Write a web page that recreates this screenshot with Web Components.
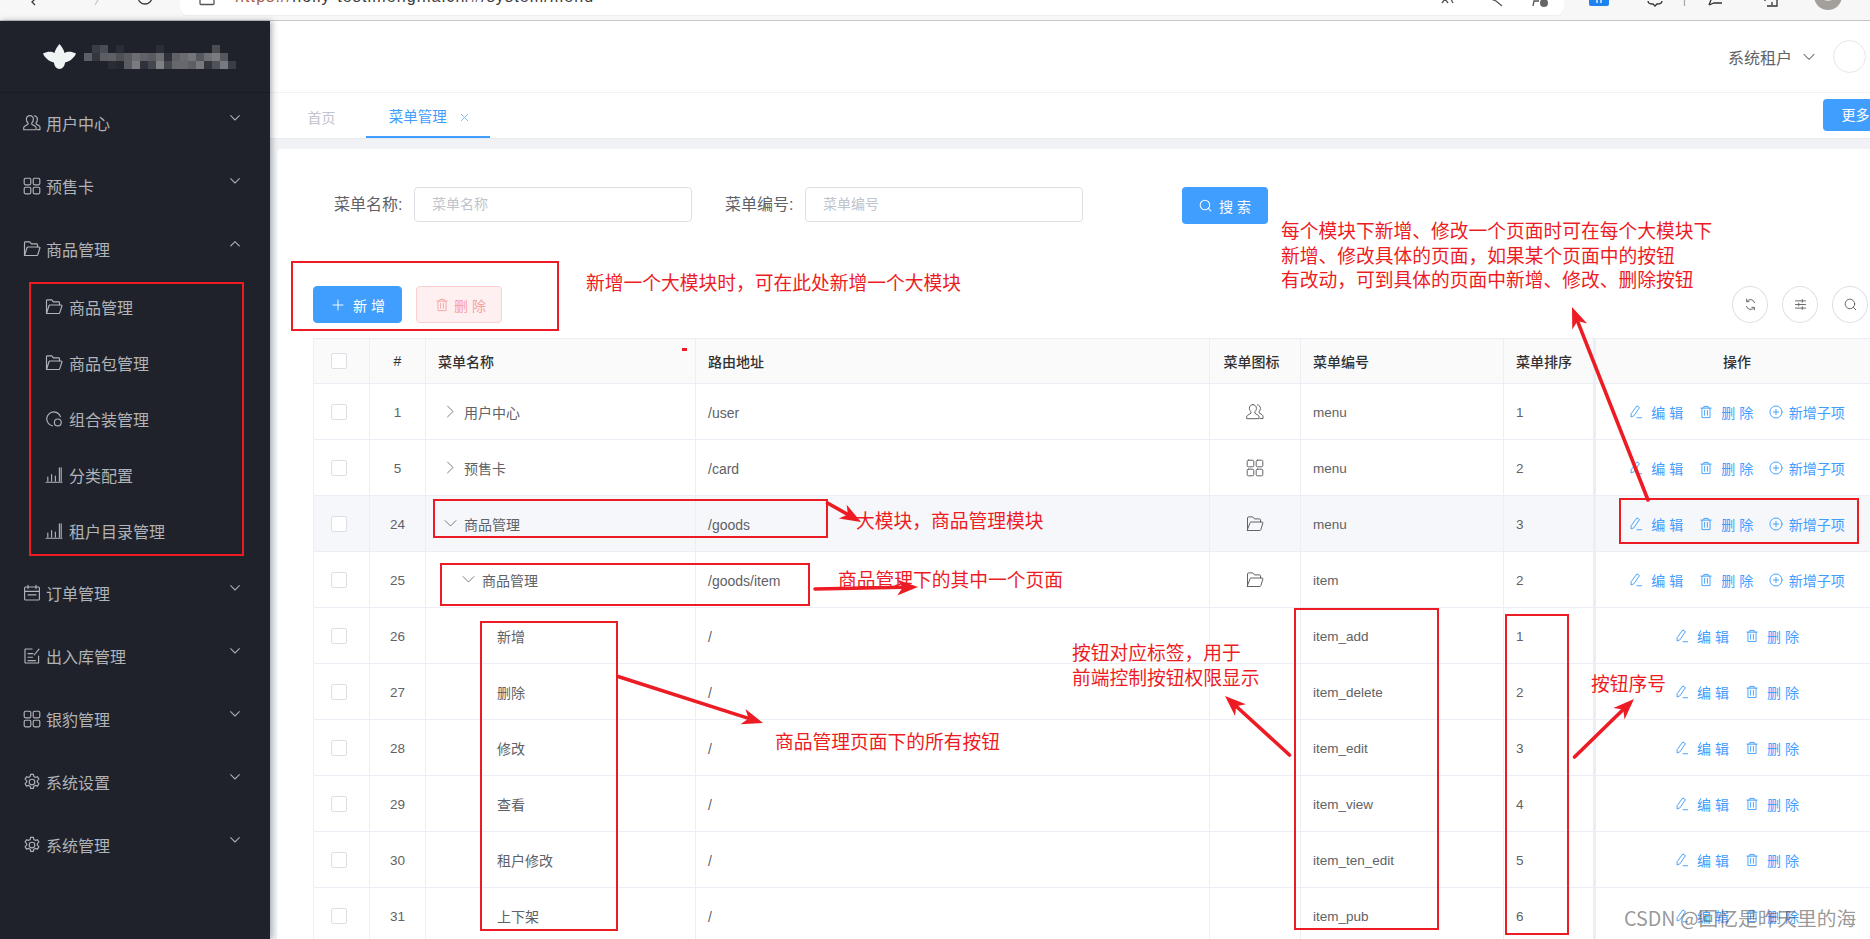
<!DOCTYPE html>
<html lang="zh-CN">
<head>
<meta charset="utf-8">
<title>菜单管理</title>
<style>
html,body{margin:0;padding:0;width:1870px;height:939px;overflow:hidden;background:#fff;font-family:"Liberation Sans","Noto Sans CJK SC",sans-serif;}
anno-box.dot{border:0;background:#ed1c24}
</style>
</head>
<body>
<admin-page>
  <browser-bar slot="bar"></browser-bar>
  <side-nav slot="side">
    <logo-mark></logo-mark>
    <nav-item icon="user" chev="down">用户中心</nav-item>
    <nav-item icon="grid" chev="down">预售卡</nav-item>
    <nav-item icon="folder" chev="up">商品管理</nav-item>
    <nav-group>
      <nav-sub icon="folder">商品管理</nav-sub>
      <nav-sub icon="folder">商品包管理</nav-sub>
      <nav-sub icon="pie">组合装管理</nav-sub>
      <nav-sub icon="chart">分类配置</nav-sub>
      <nav-sub icon="chart">租户目录管理</nav-sub>
    </nav-group>
    <nav-item icon="date" chev="down">订单管理</nav-item>
    <nav-item icon="doc" chev="down">出入库管理</nav-item>
    <nav-item icon="grid" chev="down">银豹管理</nav-item>
    <nav-item icon="gear" chev="down">系统设置</nav-item>
    <nav-item icon="gear" chev="down">系统管理</nav-item>
  </side-nav>
  <top-head slot="main"></top-head>
  <tab-strip slot="main"></tab-strip>
  <content-card slot="main">
    <search-form></search-form>
    <tool-row></tool-row>
    <menu-table>
      <menu-row idx="1" level="0" chev="right" route="/user" icon="user" code="menu" sort="1" act="3">用户中心</menu-row>
      <menu-row idx="5" level="0" chev="right" route="/card" icon="grid" code="menu" sort="2" act="3">预售卡</menu-row>
      <menu-row idx="24" level="0" chev="down" route="/goods" icon="folder" code="menu" sort="3" act="3" hl>商品管理</menu-row>
      <menu-row idx="25" level="1" chev="down" route="/goods/item" icon="folder" code="item" sort="2" act="3">商品管理</menu-row>
      <menu-row idx="26" level="2" route="/" code="item_add" sort="1" act="2">新增</menu-row>
      <menu-row idx="27" level="2" route="/" code="item_delete" sort="2" act="2">删除</menu-row>
      <menu-row idx="28" level="2" route="/" code="item_edit" sort="3" act="2">修改</menu-row>
      <menu-row idx="29" level="2" route="/" code="item_view" sort="4" act="2">查看</menu-row>
      <menu-row idx="30" level="2" route="/" code="item_ten_edit" sort="5" act="2">租户修改</menu-row>
      <menu-row idx="31" level="2" route="/" code="item_pub" sort="6" act="2">上下架</menu-row>
    </menu-table>
  </content-card>
  <anno-layer slot="over">
    <anno-box style="left:291px;top:261px;width:268px;height:70px"></anno-box>
    <anno-box style="left:29px;top:282px;width:215px;height:274px"></anno-box>
    <anno-box style="left:433px;top:499px;width:395px;height:39px"></anno-box>
    <anno-box style="left:440px;top:563px;width:370px;height:43px"></anno-box>
    <anno-box style="left:480px;top:621px;width:138px;height:310px"></anno-box>
    <anno-box style="left:1294px;top:608px;width:145px;height:322px"></anno-box>
    <anno-box style="left:1505px;top:614px;width:64px;height:321px"></anno-box>
    <anno-box style="left:1619px;top:498px;width:240px;height:46px"></anno-box>
    <anno-box class="dot" style="left:682px;top:348px;width:5px;height:3px"></anno-box>
    <anno-arrows></anno-arrows>
    <anno-text style="left:586px;top:270px">新增一个大模块时，可在此处新增一个大模块</anno-text>
    <anno-text style="left:1281px;top:218px">每个模块下新增、修改一个页面时可在每个大模块下<br>新增、修改具体的页面，如果某个页面中的按钮<br>有改动，可到具体的页面中新增、修改、删除按钮</anno-text>
    <anno-text style="left:856px;top:508px">大模块，商品管理模块</anno-text>
    <anno-text style="left:838px;top:567px">商品管理下的其中一个页面</anno-text>
    <anno-text style="left:775px;top:729px">商品管理页面下的所有按钮</anno-text>
    <anno-text style="left:1072px;top:640px">按钮对应标签，用于<br>前端控制按钮权限显示</anno-text>
    <anno-text style="left:1591px;top:671px">按钮序号</anno-text>
    <water-mark style="left:1624px;top:904px">CSDN @回忆是昨天里的海</water-mark>
  </anno-layer>
</admin-page>

<script>
const ICONS = {
  user:'<path d="M6.800 1.600A3.400 3.400 0 0 0 3.400 5.200c0 1.700.7 2.900 1.600 3.700v1.300L1.600 12.300c-.6.4-.9.9-.9 1.500v1.900h12.400v-1.900c0-.6-.3-1.100-.9-1.500L8.800 10.200V8.900c.9-.8 1.600-2 1.600-3.700a3.500 3.500 0 0 0-3.600-3.600z"/><path d="M11.400 1.800c1.900.4 3 1.800 3 3.600 0 1.400-.5 2.500-1.300 3.300v1.200l3 1.900c.6.4.9.9.9 1.500v2.300h-2.600"/>',
  grid:'<rect x="1.200" y="1.200" width="6.600" height="6.600" rx="1.200"/><rect x="10.200" y="1.200" width="6.600" height="6.600" rx="1.200"/><rect x="1.200" y="10.200" width="6.600" height="6.600" rx="1.200"/><rect x="10.200" y="10.200" width="6.600" height="6.600" rx="1.200"/>',
  folder:'<path d="M1.500 15.500V2.800c0-.5.4-.9.9-.9h4.400l1.600 2h5.200c.5 0 .9.4.9.9V7"/><path d="M1.500 15.500h12.300c.5 0 .9-.3 1-.8L16.900 8c.1-.5-.2-1-.8-1H5c-.5 0-.9.3-1 .8z"/>',
  pie:'<path d="M15.400 6.600A7 7 0 1 0 7.400 15.800"/><circle cx="12.800" cy="12.400" r="3.400"/>',
  chart:'<path d="M1 16.200h16M2.800 15v-4M6.600 15V8.600M10.400 15v-5M14.400 15V1.800M16.200 15V1.800"/>',
  date:'<rect x="1.600" y="3" width="14.800" height="13" rx="1"/><path d="M5 1.200v3.400M13 1.200v3.400M1.600 7.400h14.800M5 10.800h8"/>',
  doc:'<path d="M15.600 9v6.400c0 .4-.2.6-.6.6H2.600c-.4 0-.6-.2-.6-.6V2.600c0-.4.2-.6.6-.6H9"/><path d="M5 6.600h5M5 10.200h4.500M5 13.600h7.500M11.200 8 16 2.200"/>',
  gear:'<path d="M7.600 1.400h2.800l.5 2.200 1.500.8 2.100-.7 1.400 2.400-1.600 1.500v1.600l1.600 1.500-1.400 2.400-2.100-.7-1.500.8-.5 2.200H7.600l-.5-2.200-1.500-.8-2.100.7-1.400-2.400 1.600-1.500V7.600L2.100 6.100l1.400-2.400 2.100.7 1.500-.8z"/><circle cx="9" cy="9" r="2.800"/>',
  down:'<path d="M2.500 5.500 9 12l6.500-6.500"/>',
  up:'<path d="M2.500 12 9 5.500l6.500 6.500"/>',
  right:'<path d="M5.500 2.500 12 9l-6.500 6.500"/>',
  edit:'<path d="M10.600 1.400 13.400 3.400 6.200 14 2.600 15.400 2.800 11.600z"/><path d="M10.200 16.400h6"/>',
  trash:'<path d="M2.400 4h13.200M6.200 4V1.800h5.600V4M3.800 4v12.200h10.400V4M7.200 7v6.200M10.800 7v6.200"/>',
  plusc:'<circle cx="9" cy="9" r="7.800"/><path d="M9 5.600v6.800M5.600 9h6.800"/>',
  plus:'<path d="M9 1.500v15M1.500 9h15"/>',
  search:'<circle cx="8.200" cy="8.200" r="6.600"/><path d="M13 13l3.400 3.400"/>',
  refresh:'<path d="M14.600 6.400A6 6 0 0 0 4 4.600M3.400 11.600A6 6 0 0 0 14 13.400"/><path d="M3.600 1.600v3.400H7M14.400 16.400V13H11"/>',
  slider:'<path d="M2 4h14M2 9h14M2 14h14M11.500 2.200v3.600M6.500 7.200v3.600M11.500 12.200v3.600"/>'
};
function make(name, html){
  customElements.define(name, class extends HTMLElement{
    constructor(){super();this.attachShadow({mode:'open'}).innerHTML=html;}
  });
}
customElements.define('ui-icon', class extends HTMLElement{
  constructor(){super();this.attachShadow({mode:'open'});}
  connectedCallback(){
    const s=this.getAttribute('size')||18, w=this.getAttribute('sw')||1.15;
    this.shadowRoot.innerHTML=`<style>:host{display:inline-flex;flex:none;width:${s}px;height:${s}px}svg{display:block;fill:none;stroke:currentColor;stroke-width:${w};stroke-linecap:round;stroke-linejoin:round}</style><svg width="${s}" height="${s}" viewBox="0 0 18 18">${ICONS[this.getAttribute('name')]||''}</svg>`;
  }
});

make('admin-page',`<style>
:host{display:block;position:relative;width:1870px;height:939px;overflow:hidden;color:#606266;font:14px "Liberation Sans","Noto Sans CJK SC",sans-serif}
.body{display:flex;height:918px}
.side{flex:none;width:270px;position:relative;z-index:2}
.main{flex:none;width:1600px;height:918px;overflow:hidden;background:#f0f2f5;display:flex;flex-direction:column}
</style>
<slot name="bar"></slot>
<div class="body"><div class="side"><slot name="side"></slot></div><div class="main"><slot name="main"></slot></div></div>
<slot name="over"></slot>`);

make('browser-bar',`<style>
:host{display:flex;height:21px;box-sizing:border-box;background:#f7f7f7;border-bottom:1px solid #c6c6c6;overflow:hidden}
svg{display:block;flex:none;fill:none;stroke:#3a3a3a;stroke-width:1.3}
.pill{flex:none;width:1384px;height:15px;background:#fff;border-radius:0 0 8px 8px;display:flex;overflow:hidden;box-shadow:0 1px 1px #eee}
.url{flex:none;margin:-13px 0 0 8px;height:20px;font:16px/20px "Liberation Sans",sans-serif;letter-spacing:1.140px;color:#3a3a3a;white-space:nowrap;width:900px}
.url b{font-weight:400;color:#a5604a}
.end{margin-left:auto}
</style>
<svg width="180" height="20" viewBox="0 0 180 20"><path d="M36 -2l-4 4 3 3"/><path d="M95 5l3-5" stroke="#c9c9c9"/><circle cx="145" cy="-3" r="7"/></svg>
<div class="pill">
  <svg width="47" height="15" viewBox="0 0 47 15"><path d="M20 -3v6.500a1 1 0 0 0 1 1h12a1 1 0 0 0 1-1V-3" stroke="#555"/></svg>
  <div class="url"><b>https://</b>holly-testimenghiaich/#/system/menu</div>
  <svg class="end" width="124" height="15" viewBox="1440 0 124 15">
    <path d="M1442 3l3-4 3 4M1453 3l-2-4" stroke="#555"/>
    <path d="M1491 -1l5 2 6 5" stroke="#555"/>
    <path d="M1533 6l1-5h5" stroke="#555"/><circle cx="1544" cy="3" r="4" fill="#666" stroke="none"/>
  </svg>
</div>
<svg width="306" height="20" viewBox="1564 0 306 20">
  <rect x="1589" y="-3" width="20" height="9" rx="2" fill="#1c83f0" stroke="none"/><path d="M1597 0v3M1601 0v3" stroke="#fff"/>
  <path d="M1648 1c0 3 3 3 5 3l2 2 2-2c2 0 5 0 5-3" stroke="#333"/>
  <path d="M1684.500 0v6" stroke="#aaa"/>
  <path d="M1709 5l2-5M1709 5l5-2h8" stroke="#333"/>
  <path d="M1765 0v1M1767 6h10v-6M1772 2v3" stroke="#333"/>
  <circle cx="1828" cy="-4" r="14" fill="#a3a09c" stroke="none"/><circle cx="1828" cy="-7" r="8" fill="#d9d6d2" stroke="none"/>
</svg>`);

make('side-nav',`<style>
:host{display:block;height:918px;background:#1f222b;box-shadow:2px 0 6px rgba(40,50,70,.38)}
</style><slot></slot>`);

customElements.define('logo-mark', class extends HTMLElement{
  constructor(){super();
    const rows=[
      [0,'#3a3d45','#4a4c53',0,'#292d35',0,0,0,0,'#2b2e36',0,0,0,0,0,0,'#4b4d53',0,0],
      ['#5d5f65','#33363d','#5c5e64','#5e6066','#4d5057','#595b61','#6b6d72','#606268','#595b61','#6c6e72','#2f323a','#5f6167','#696b70','#73757a','#545660','#6f7075','#7a7b80','#55575e',0],
      [0,0,0,'#2a2d35','#252830','#5a5c62','#7a7b80','#2f323a','#43464d','#808185','#45474e','#66686d','#66686d','#5d5f64','#77797e','#33363d','#50525a','#77797e','#3a3d44']
    ];
    const cells=rows.flat().map(c=>`<i style="background:${c||'transparent'}"></i>`).join('');
    this.attachShadow({mode:'open'}).innerHTML=`<style>
:host{display:flex;align-items:center;height:72px;box-sizing:border-box;padding-left:43px;border-bottom:1px solid #1a1d25}
.m{display:grid;grid-template-columns:repeat(19,8px);grid-auto-rows:8px;margin-left:8px}
svg{display:block;flex:none}
</style>
<svg width="33" height="25" viewBox="0 0 33 25"><path d="M16.500 0C19 3 21 6 21.500 9 24 7.500 28 7 33 9.500 31 14 27 17.500 22 18.500 22 21.500 19.500 25 16.500 25 13.500 25 11 21.500 11 18.500 6 17.500 2 14 0 9.500 5 7 9 7.500 11.500 9 12 6 14 3 16.500 0z" fill="#eef3f3"/></svg>
<div class="m">${cells}</div>`;
  }
});

customElements.define('nav-item', class extends HTMLElement{
  constructor(){super();this.attachShadow({mode:'open'});}
  connectedCallback(){
    this.shadowRoot.innerHTML=`<style>
:host{display:flex;align-items:center;height:63px;box-sizing:border-box;padding:0 0 4px 23px;color:#b1b3b7;font-size:16px}
.t{margin-left:5px;white-space:nowrap;flex:1}
.c{margin:-10px 29px 0 0;color:#a8aaae}
</style><ui-icon name="${this.getAttribute('icon')}"></ui-icon><span class="t"><slot></slot></span><ui-icon class="c" size="12" name="${this.getAttribute('chev')}" sw="1.6"></ui-icon>`;
  }
});
make('nav-group',`<style>:host{display:block;margin:-2px 0 3px}</style><slot></slot>`);
customElements.define('nav-sub', class extends HTMLElement{
  constructor(){super();this.attachShadow({mode:'open'});}
  connectedCallback(){
    this.shadowRoot.innerHTML=`<style>
:host{display:flex;align-items:center;height:56px;box-sizing:border-box;padding:0 0 2px 45px;color:#b1b3b7;font-size:16px}
.t{margin-left:6px;white-space:nowrap}
</style><ui-icon name="${this.getAttribute('icon')}"></ui-icon><span class="t"><slot></slot></span>`;
  }
});

make('top-head',`<style>
:host{display:flex;flex:none;align-items:center;justify-content:flex-end;height:72px;box-sizing:border-box;padding:0 4px 0 0;background:#fff;border-bottom:1px solid #f2f2f2;color:#606266;font-size:16px}
ui-icon{margin:0 17px 0 10px;color:#777}
.a{width:33px;height:33px;box-sizing:border-box;border-radius:50%;border:1px solid #e6e6e6}
</style><span>系统租户</span><ui-icon name="down" size="14" sw="1.3"></ui-icon><span class="a"></span>`);

make('tab-strip',`<style>
:host{display:flex;flex:none;height:45px;background:#fff;border-bottom:1px solid #e8eaee;font-size:14px;overflow:hidden}
.t{box-sizing:border-box;height:45px;padding-top:2px;display:flex;align-items:center;white-space:nowrap}
.h{margin-left:37.600px;width:58.400px;color:#c0c4cc}
.act{width:124px;padding-left:22.700px;color:#409eff;border-bottom:2px solid #409eff;font-size:14.500px}
.x{margin:3px 0 0 12px;color:#7dbcff}
.m{margin:6px -14px 0 auto;width:61px;height:32px;box-sizing:border-box;padding-left:18.500px;background:#409eff;color:#fff;border-radius:4px;line-height:32px;white-space:nowrap}
</style>
<span class="t h">首页</span>
<span class="t act">菜单管理<ui-icon class="x" name="plus" size="11" sw="1.500" style="transform:rotate(45deg)"></ui-icon></span>
<span class="m">更多</span>`);

make('content-card',`<style>
:host{display:block;flex:none;margin:10px 0 0 7px;height:800px;background:#fff;border-radius:4px 0 0 0;overflow:hidden;box-sizing:border-box;padding:38px 0 0 36px}
</style><slot></slot>`);

make('search-form',`<style>
:host{display:flex;align-items:flex-start;height:36px;font-size:16px;color:#606266;white-space:nowrap}
label{flex:none;line-height:35px}
.i{flex:none;box-sizing:border-box;height:35px;border:1px solid #dcdfe6;border-radius:4px;padding-left:17px;font-size:14px;line-height:33px;color:#c0c4cc}
.b{flex:none;box-sizing:border-box;width:86px;height:37px;margin-left:99px;display:flex;align-items:center;justify-content:center;gap:7px;background:#409eff;color:#fff;border-radius:4px;font-size:14px}
</style>
<label style="margin-left:21px;width:80px">菜单名称:</label><div class="i" style="width:278px">菜单名称</div>
<label style="margin-left:33px;width:80px">菜单编号:</label><div class="i" style="width:278px">菜单编号</div>
<div class="b"><ui-icon name="search" size="13" sw="1.4"></ui-icon><span>搜 索</span></div>`);

make('tool-row',`<style>
:host{display:flex;align-items:center;height:37px;margin:63px 2px 15px 0;font-size:14px}
.b{box-sizing:border-box;height:37px;display:flex;align-items:center;border-radius:4px;white-space:nowrap}
.add{width:89px;padding-left:18px;background:#409eff;color:#fff;border:1px solid #409eff}
.add span{margin-left:9px}
.del{width:85.500px;margin-left:14px;padding-left:18px;background:#fef0f0;color:#f6a1a1;border:1px solid #fcd0d0}
.del span{margin-left:5px}
.r{flex:none;width:36px;height:37px;box-sizing:border-box;border:1px solid #dcdfe6;border-radius:50%;display:flex;align-items:center;justify-content:center;color:#606266;margin-left:14px}
.sp{flex:1}
</style>
<div class="b add"><ui-icon name="plus" size="12" sw="1.4"></ui-icon><span>新 增</span></div>
<div class="b del"><ui-icon name="trash" size="14"></ui-icon><span>删 除</span></div>
<div class="sp"></div>
<div class="r"><ui-icon name="refresh" size="13" sw="1.3"></ui-icon></div>
<div class="r"><ui-icon name="slider" size="13" sw="1.3"></ui-icon></div>
<div class="r"><ui-icon name="search" size="13" sw="1.3"></ui-icon></div>`);

const ROW_STYLE=`
:host{display:grid;grid-template-columns:57px 56px 270px 514px 91px 203px 90px 284px;width:1565px}
.c{box-sizing:border-box;border-right:1px solid #ebeef5;border-bottom:1px solid #ebeef5;display:flex;align-items:center;padding:0 12px;min-width:0;white-space:nowrap}
.k{border-left:1px solid #ebeef5;padding:0 0 0 17px}
.ctr{justify-content:center;padding:0}
.chk{box-sizing:border-box;width:16px;height:16px;border:1px solid #dcdfe6;border-radius:2px;background:#fff}
.f{border-right:0;border-left:2px solid #ebeef5}
`;
make('menu-table',`<style>:host{display:block;font-size:14px}</style><menu-head></menu-head><slot></slot>`);
make('menu-head',`<style>${ROW_STYLE}
:host{height:46px;color:#303133;font-weight:500}
.c{background:#fafafa;border-top:1px solid #ebeef5;height:46px}
.ic{padding:0 0 0 13.600px}
</style>
<div class="c k"><span class="chk"></span></div><div class="c ctr">#</div><div class="c">菜单名称</div><div class="c">路由地址</div><div class="c ic">菜单图标</div><div class="c">菜单编号</div><div class="c">菜单排序</div><div class="c ctr f">操作</div>`);
customElements.define('row-act', class extends HTMLElement{
  constructor(){super();this.attachShadow({mode:'open'});}
  connectedCallback(){
    const g=this.getAttribute('gap')||8;
    this.shadowRoot.innerHTML=`<style>:host{display:inline-flex;align-items:center;color:#409eff;white-space:nowrap}span{margin-left:${g}px}</style><ui-icon name="${this.getAttribute('icon')}" size="14" sw="1.2"></ui-icon><span><slot></slot></span>`;
  }
});
customElements.define('menu-row', class extends HTMLElement{
  constructor(){super();this.attachShadow({mode:'open'});}
  connectedCallback(){
    const a=n=>this.getAttribute(n)||'';
    const lvl=+a('level');
    const bg=this.hasAttribute('hl')?'#f5f7fa':'#fff';
    const pad=[0,18,35][lvl];
    const chev=a('chev')?`<ui-icon name="${a('chev')}" size="15" sw="1.15" style="margin:0 6.500px 0 4.500px;color:#777"></ui-icon>`:`<span style="width:24px;flex:none"></span>`;
    const acts=`<row-act icon="edit">编 辑</row-act><row-act icon="trash" style="margin-left:16px">删 除</row-act>`+(a('act')=='3'?`<row-act icon="plusc" gap="5.500" style="margin-left:16px">新增子项</row-act>`:'');
    this.shadowRoot.innerHTML=`<style>${ROW_STYLE}
:host{height:56px;color:#606266}
.c{background:${bg};height:56px}
.n{padding-left:${12+pad}px}
.lat{font-size:13.500px;padding-top:2px}
.rt{font-size:14px;padding-top:2px}
</style>
<div class="c k"><span class="chk"></span></div>
<div class="c ctr lat">${a('idx')}</div>
<div class="c n">${chev}<span><slot></slot></span></div>
<div class="c rt">${a('route')}</div>
<div class="c ctr">${a('icon')?`<ui-icon name="${a('icon')}" size="18" sw="1"></ui-icon>`:''}</div>
<div class="c lat">${a('code')}</div>
<div class="c lat">${a('sort')}</div>
<div class="c ctr f">${acts}</div>`;
  }
});

make('anno-layer',`<style>:host{display:block;position:absolute;left:0;top:0;width:1870px;height:939px;pointer-events:none;z-index:5;overflow:hidden}</style><slot></slot>`);
make('anno-box',`<style>:host{display:block;position:absolute;box-sizing:border-box;border:2px solid #ed1c24}</style>`);
make('anno-text',`<style>:host{display:block;position:absolute;white-space:nowrap;color:#ed1c24;font:18.750px/24.500px "Noto Sans CJK SC",sans-serif}</style><slot></slot>`);
make('water-mark',`<style>:host{display:block;position:absolute;white-space:nowrap;color:rgba(85,85,85,.62);font:19.700px/28px "Noto Sans CJK SC",sans-serif}</style><slot></slot>`);
customElements.define('anno-arrows', class extends HTMLElement{
  constructor(){super();
    const list=[[1648,500,1572,307],[827.5,503,861,522],[815,589,918,587],[618,676.5,763,723],[1289.5,755,1225,696],[1574.5,757,1634,699]];
    const shapes=list.map(([x1,y1,x2,y2])=>{
      const d=Math.hypot(x2-x1,y2-y1),ux=(x2-x1)/d,uy=(y2-y1)/d,px=-uy,py=ux;
      const L=Math.min(21,d*.6),W=8;
      const bx=x2-ux*L,by=y2-uy*L,nx=x2-ux*L*.72,ny=y2-uy*L*.72;
      return `<line x1="${x1}" y1="${y1}" x2="${nx}" y2="${ny}"/><polygon points="${x2},${y2} ${bx+px*W},${by+py*W} ${nx},${ny} ${bx-px*W},${by-py*W}"/>`;
    }).join('');
    this.attachShadow({mode:'open'}).innerHTML=`<style>:host{display:block;position:absolute;left:0;top:0}svg{display:block}line{stroke:#ed1c24;stroke-width:3.600;stroke-linecap:round}polygon{fill:#ed1c24}</style><svg width="1870" height="939">${shapes}</svg>`;
  }
});
</script>
</body>
</html>
